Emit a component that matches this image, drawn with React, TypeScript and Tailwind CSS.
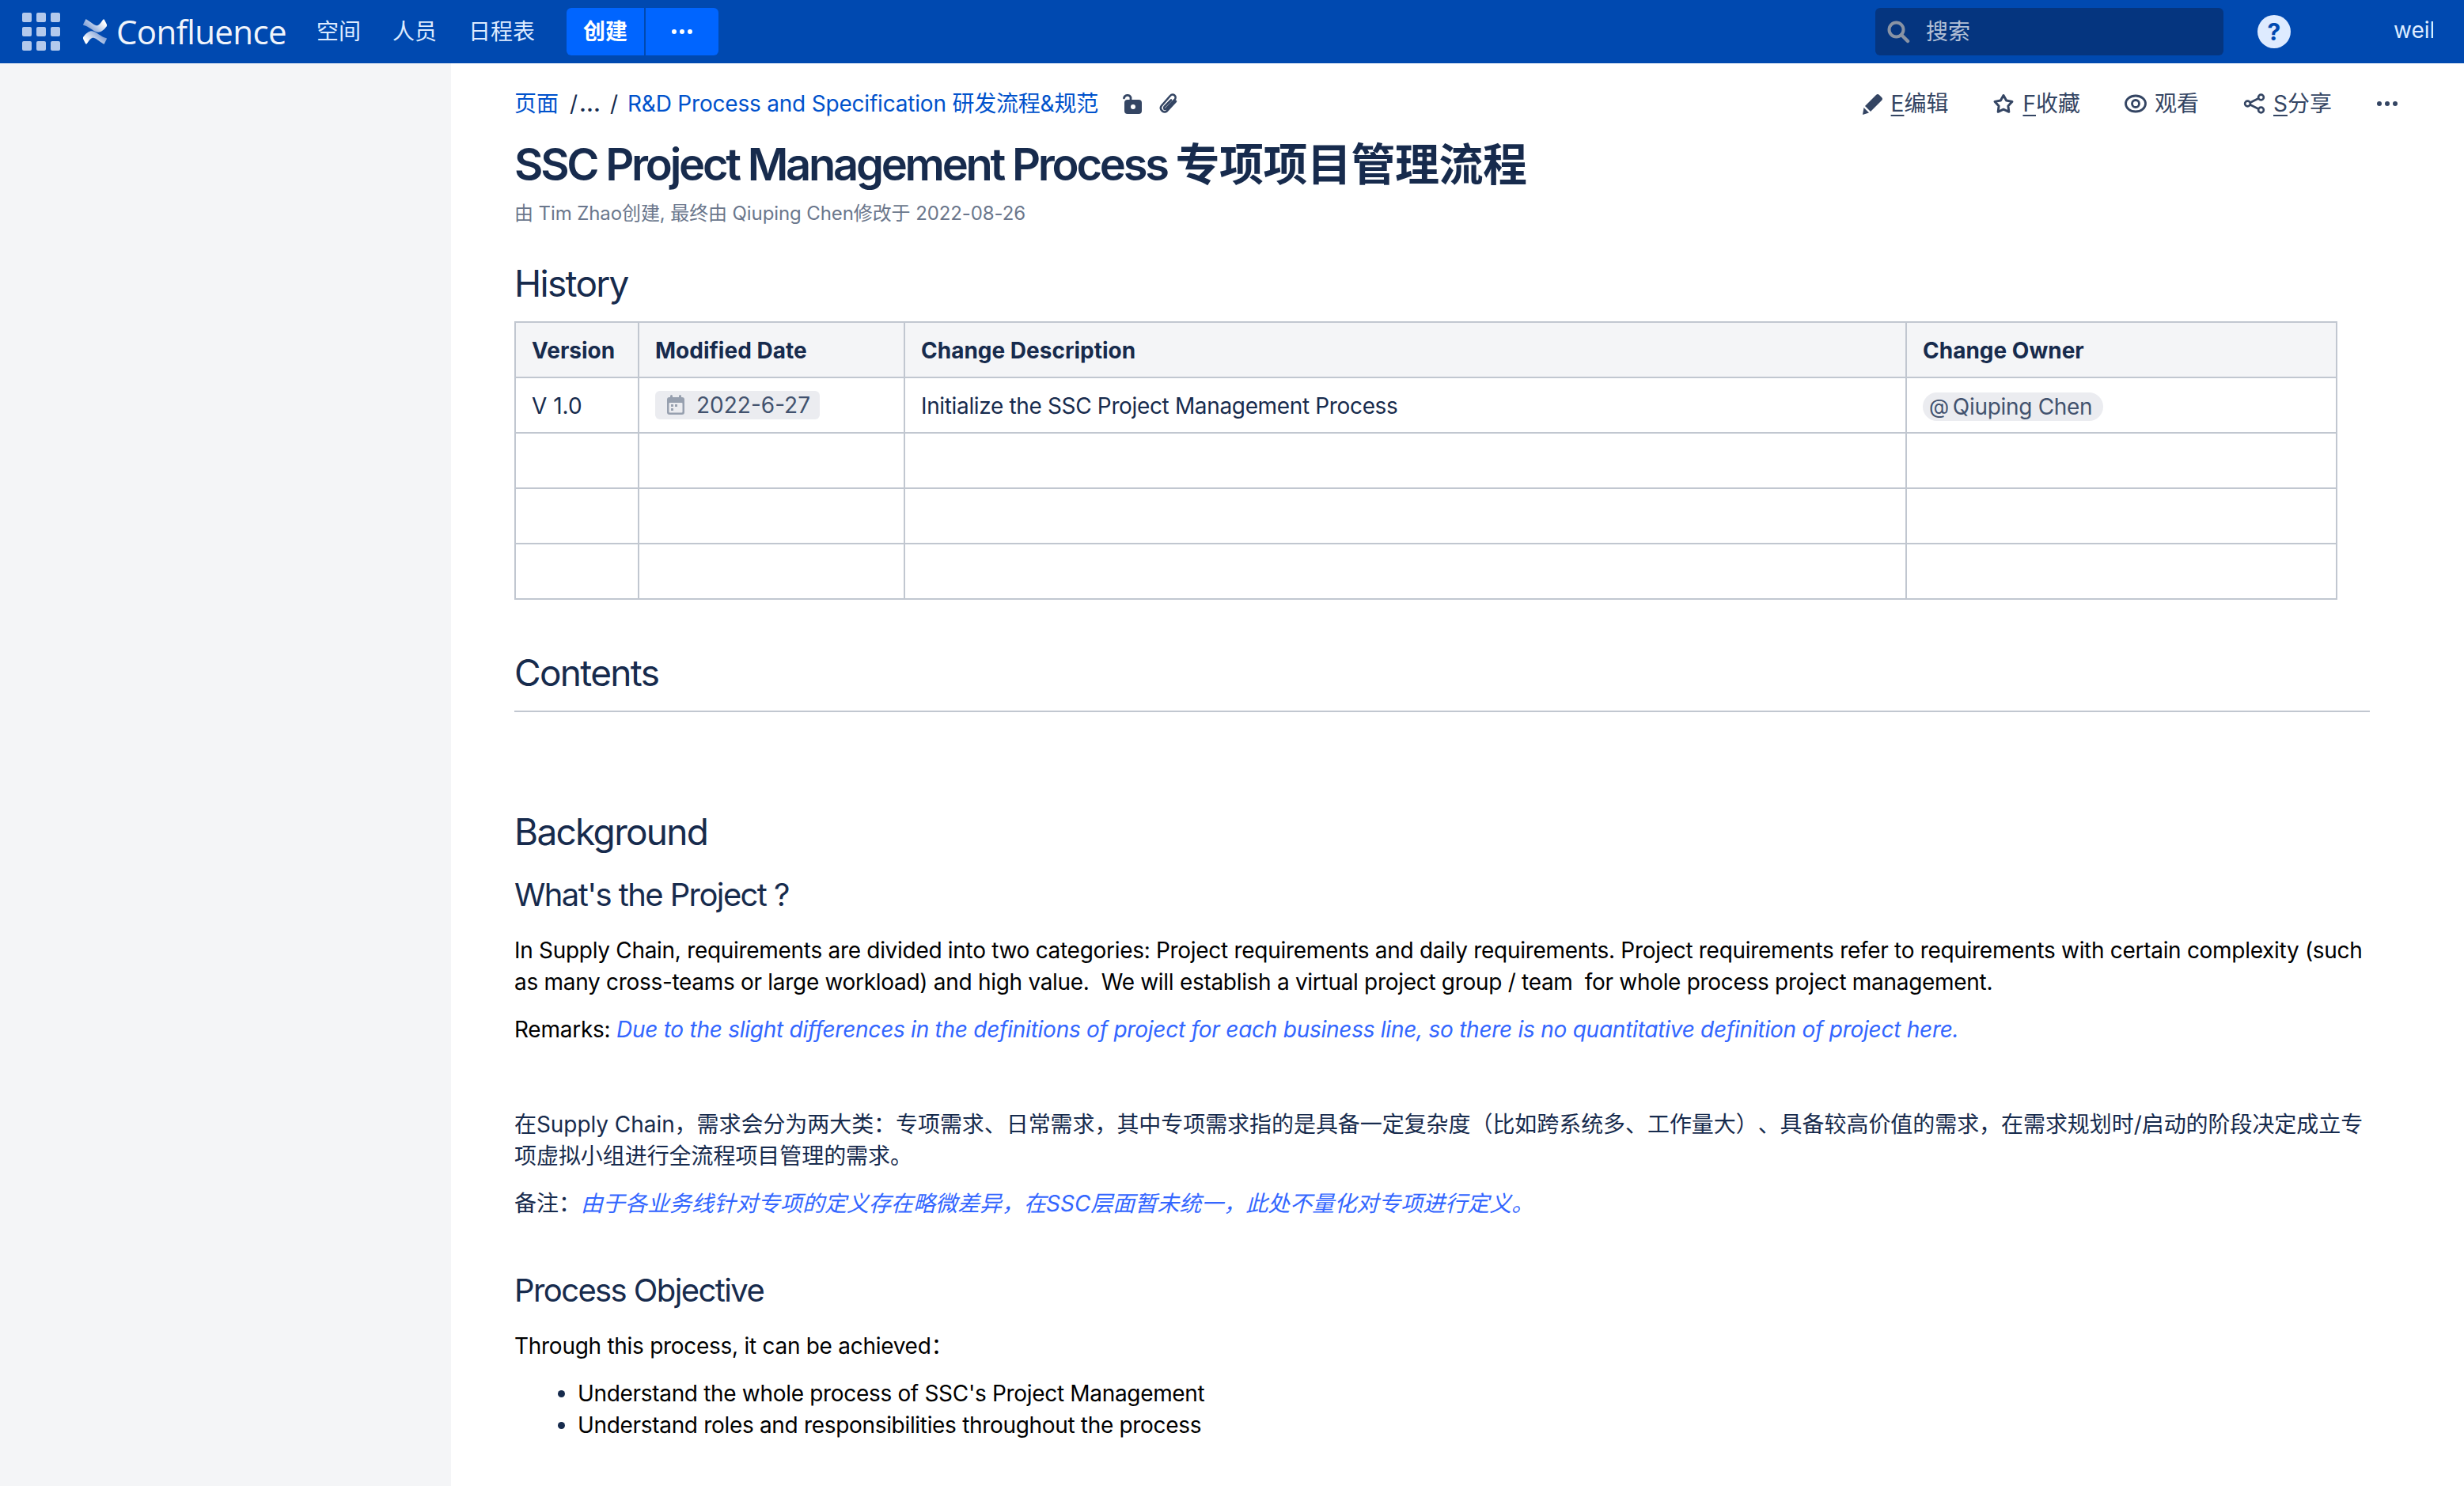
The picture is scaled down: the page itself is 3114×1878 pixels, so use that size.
import React from "react";

const font = { fontFamily: 'Inter, "Noto Sans CJK SC", sans-serif' };

function AppGrid() {
  return (
    <div className="grid grid-cols-3 gap-[6px] w-[48px]">
      {Array.from({ length: 9 }).map((_, i) => (
        <div key={i} className="w-[12px] h-[12px] rounded-[2px] bg-[#b3c9ec]" />
      ))}
    </div>
  );
}

function Logo() {
  return (
    <svg width="32" height="32" viewBox="0 0 32 32" className="mb-[1px]">
      <defs>
        <linearGradient id="lg2" x1="1" y1="0" x2="0" y2="0.6">
          <stop offset="0.2" stopColor="#ffffff" />
          <stop offset="1" stopColor="#6f93d0" />
        </linearGradient>
        <linearGradient id="lg3" x1="0" y1="1" x2="1" y2="0.4">
          <stop offset="0.2" stopColor="#ffffff" />
          <stop offset="1" stopColor="#6f93d0" />
        </linearGradient>
      </defs>
      <path d="M1 23c5-7 10-9 14-7 5 2 8 6 15 8 1 0 1 1 1 1l-3 6c0 1-1 1-2 0-5-3-8-6-11-7-3-1-5 1-9 7-1 1-1 1-2 0l-3-6z" fill="url(#lg3)" />
      <path d="M31 9c-5 7-10 9-14 7-5-2-8-6-15-8-1 0-1-1-1-1l3-6c0-1 1-1 2 0 5 3 8 6 11 7 3 1 5-1 9-7 1-1 1-1 2 0l3 6z" fill="url(#lg2)" />
    </svg>
  );
}

function Dots({ color, size = 6 }: { color: string; size?: number }) {
  return (
    <svg width={size * 3 + 8} height={size} viewBox={`0 0 ${size * 3 + 8} ${size}`}>
      <circle cx={size / 2} cy={size / 2} r={size / 2} fill={color} />
      <circle cx={size * 1.5 + 4} cy={size / 2} r={size / 2} fill={color} />
      <circle cx={size * 2.5 + 8} cy={size / 2} r={size / 2} fill={color} />
    </svg>
  );
}

function Action({ icon, hotkey, label }: { icon: React.ReactNode; hotkey?: string; label: string }) {
  return (
    <div className="flex items-center gap-[10px]">
      {icon}
      <span className="text-[28px] leading-[40px] text-[#344563]">
        {hotkey && <span className="underline underline-offset-[4px] decoration-2">{hotkey}</span>}
        {label}
      </span>
    </div>
  );
}

const Pencil = (
  <svg width="28" height="28" viewBox="0 0 28 28">
    <path d="M5 17L19 3Q21 1 23 3L26 6Q28 8 26 10L12 24Z" fill="#344563" />
    <path d="M3.5 19L10 25.5L2 28Z" fill="#344563" />
  </svg>
);
const Star = (
  <svg width="28" height="28" viewBox="0 0 28 28">
    <path d="M14 3.5L17.6 10L24.9 11.4L19.9 16.9L20.8 24.3L14 21.2L7.2 24.3L8.1 16.9L3.1 11.4L10.4 10Z" fill="none" stroke="#344563" strokeWidth="3" strokeLinejoin="round" />
  </svg>
);
const Eye = (
  <svg width="28" height="28" viewBox="0 0 28 28">
    <ellipse cx="14" cy="14" rx="12.5" ry="10" fill="none" stroke="#344563" strokeWidth="2.8" />
    <circle cx="14" cy="14" r="4.5" fill="none" stroke="#344563" strokeWidth="2.8" />
  </svg>
);
const Share = (
  <svg width="28" height="28" viewBox="0 0 28 28">
    <path d="M22 6L6 14l16 8" fill="none" stroke="#344563" strokeWidth="2.6" />
    <circle cx="22.5" cy="6" r="3.4" fill="#fff" stroke="#344563" strokeWidth="2.6" />
    <circle cx="5.5" cy="14" r="3.4" fill="#fff" stroke="#344563" strokeWidth="2.6" />
    <circle cx="22.5" cy="22" r="3.4" fill="#fff" stroke="#344563" strokeWidth="2.6" />
  </svg>
);

function CalendarIcon() {
  return (
    <svg width="24" height="26" viewBox="0 0 24 26">
      <rect x="5" y="0" width="3" height="6" rx="1.5" fill="#97a0af" />
      <rect x="16" y="0" width="3" height="6" rx="1.5" fill="#97a0af" />
      <rect x="1" y="3" width="22" height="22" rx="3" fill="#97a0af" />
      <rect x="3.5" y="10" width="17" height="12.5" rx="1" fill="#ebecf0" />
      <rect x="6" y="12" width="3" height="3" fill="#97a0af" />
      <rect x="11" y="12" width="3" height="3" fill="#97a0af" />
      <rect x="6" y="17" width="3" height="3" fill="#97a0af" />
    </svg>
  );
}

const cellCls = "border-2 border-[#c1c7d0] px-[20px] pt-[2px] pb-0 text-left align-middle h-[70px]";

export default function App() {
  return (
    <div className="w-[3114px] h-[1878px] overflow-hidden bg-white text-[#172b4d] flex flex-col [text-spacing-trim:space-all]" style={font}>
      <header className="h-[80px] shrink-0 bg-[#0049b0] flex items-center text-white">
        <div className="ml-[28px]"><AppGrid /></div>
        <div className="ml-[28px]"><Logo /></div>
        <span className="ml-[11px] text-[42px] leading-[48px] text-[#f0f4fb] tracking-[-0.6px]" style={{ fontFamily: '"Open Sans", sans-serif' }}>Confluence</span>
        <nav className="ml-[38px] flex gap-[40px] text-[28px] text-[#deebff]">
          <span>空间</span>
          <span>人员</span>
          <span>日程表</span>
        </nav>
        <div className="ml-[40px] h-[60px] w-[192px] rounded-[6px] bg-[#0065ff] flex items-stretch">
          <div className="w-[100px] flex items-center justify-center text-[28px] font-bold border-r-2 border-[#0049b0]">创建</div>
          <div className="flex-1 flex items-center justify-center"><Dots color="#ffffff" /></div>
        </div>
        <div className="ml-auto w-[440px] h-[60px] rounded-[6px] bg-[#05357f] flex items-center pl-[14px]">
          <svg width="30" height="30" viewBox="0 0 30 30">
            <circle cx="12.5" cy="12.5" r="9" fill="none" stroke="#8993a4" strokeWidth="4" />
            <path d="M19 19l8 8" stroke="#8993a4" strokeWidth="4.5" strokeLinecap="round" />
          </svg>
          <span className="ml-[20px] text-[28px] text-[#b3c0d6]">搜索</span>
        </div>
        <div className="ml-[43px] w-[42px] h-[42px] rounded-full bg-[#deebff] flex items-center justify-center">
          <span className="text-[30px] font-bold text-[#0049b0] leading-none">?</span>
        </div>
        <div className="ml-[130px] mr-[39px] w-[50px] overflow-hidden text-[28px] leading-[38px] mb-[4px] text-[#deebff] whitespace-nowrap">weilin</div>
      </header>

      <div className="flex flex-1 min-h-0">
        <aside className="w-[570px] shrink-0 bg-[#f4f5f7]" />
        <main className="flex-1 pl-[80px] pr-[119px]">
          <div className="flex items-center justify-between h-[40px] mt-[31px] mr-[-35px]">
            <div className="flex items-center text-[28px] leading-[40px] text-[#0052cc]">
              <span>页面</span>
              <span className="ml-[14px] text-[#172b4d]">/</span>
              <span className="ml-[2px] text-[#172b4d] font-semibold">...</span>
              <span className="ml-[12px] text-[#172b4d]">/</span>
              <span className="ml-[12px] tracking-[-0.2px]">R&amp;D Process and Specification 研发流程&amp;规范</span>
              <svg className="ml-[30px]" width="26" height="28" viewBox="0 0 26 28">
                <rect x="3" y="9" width="22" height="18" rx="4" fill="#344563" />
                <path d="M2.5 7A4.5 4.5 0 0 1 11 6V11" fill="none" stroke="#344563" strokeWidth="2.8" strokeLinecap="round" />
                <circle cx="14" cy="18" r="3" fill="#fff" />
              </svg>
              <svg className="ml-[18px]" width="26" height="28" viewBox="0 0 26 28">
                <path d="M24 11L12.500 23.500c-3.500 3.500-10-2.500-6.500-7L17 4c3.500-4 9 1 5.500 5L11.500 20.500c-1.500 1.500-3.500-.5-2-2.500L18 9.500" fill="none" stroke="#344563" strokeWidth="2.6" strokeLinecap="round" strokeLinejoin="round" />
              </svg>
            </div>
            <div className="flex items-center gap-[56px]">
              <Action icon={Pencil} hotkey="E" label="编辑" />
              <Action icon={Star} hotkey="F" label="收藏" />
              <Action icon={Eye} label="观看" />
              <Action icon={Share} hotkey="S" label="分享" />
              <div className="ml-[1px]"><Dots color="#344563" /></div>
            </div>
          </div>

          <h1 className="mt-[22px] text-[56px] leading-[70px] font-semibold text-[#172b4d]">
            <span className="tracking-[-3.25px]">SSC Project Management Process </span><span className="tracking-[-0.5px]">专项项目管理流程</span>
          </h1>
          <p className="mt-[9px] text-[24px] leading-[36px] text-[#6b778c] tracking-[-0.1px]">
            由 Tim Zhao创建, 最终由 Qiuping Chen修改于 2022-08-26
          </p>

          <h2 className="mt-[42px] text-[46px] leading-[56px] tracking-[-1.7px] text-[#172b4d]">History</h2>
          <table className="mt-[20px] border-collapse table-fixed w-[2302px] text-[28px] text-[#172b4d]">
            <colgroup>
              <col className="w-[156px]" />
              <col className="w-[336px]" />
              <col className="w-[1266px]" />
              <col className="w-[544px]" />
            </colgroup>
            <thead>
              <tr className="bg-[#f4f5f7] font-bold">
                <th className={cellCls}>Version</th>
                <th className={cellCls}>Modified Date</th>
                <th className={cellCls}>Change Description</th>
                <th className={cellCls}>Change Owner</th>
              </tr>
            </thead>
            <tbody>
              <tr>
                <td className={cellCls}>V 1.0</td>
                <td className={cellCls}>
                  <span className="inline-flex items-center h-[36px] w-[208px] rounded-[6px] bg-[#ebecf0] pl-[14px] text-[#42526e] translate-y-[2px]">
                    <CalendarIcon />
                    <span className="ml-[14px]">2022-6-27</span>
                  </span>
                </td>
                <td className={cellCls + " tracking-[-0.35px]"}>Initialize the SSC Project Management Process</td>
                <td className={cellCls}>
                  <span className="inline-flex items-center h-[36px] rounded-[18px] bg-[#ebecf0] pl-[8px] pr-[14px] text-[#42526e] tracking-[-0.3px]">
                    <span className="mr-[5px] text-[26px]">@</span>Qiuping Chen
                  </span>
                </td>
              </tr>
              {[0, 1, 2].map((i) => (
                <tr key={i}>
                  <td className={cellCls} />
                  <td className={cellCls} />
                  <td className={cellCls} />
                  <td className={cellCls} />
                </tr>
              ))}
            </tbody>
          </table>

          <h2 className="mt-[64px] pb-[20px] border-b-2 border-[#c1c7d0] text-[46px] leading-[56px] tracking-[-1.7px] text-[#172b4d]">Contents</h2>

          <h2 className="mt-[123px] text-[46px] leading-[56px] tracking-[-1.7px] text-[#172b4d]">Background</h2>
          <h3 className="mt-[26px] text-[40px] leading-[52px] tracking-[-1.6px] text-[#172b4d]">What's the Project ?</h3>
          <p className="mt-[24px] text-[28px] leading-[40px] text-[#000000] tracking-[-0.3px]">
            In Supply Chain, requirements are divided into two categories: Project requirements and daily requirements. Project requirements refer to requirements with certain complexity (such as many cross-teams or large workload) and high value.&nbsp; We will establish a virtual project group / team&nbsp; for whole process project management.
          </p>
          <p className="mt-[20px] text-[28px] leading-[40px] text-[#000000] tracking-[-0.255px]">
            Remarks: <em className="text-[#3366ff]">Due to the slight differences in the definitions of project for each business line, so there is no quantitative definition of project here.</em>
          </p>
          <p className="mt-[80px] text-[28px] leading-[40px] text-[#172b4d] tracking-[-0.06px]">
            在Supply Chain，需求会分为两大类：专项需求、日常需求，其中专项需求指的是具备一定复杂度（比如跨系统多、工作量大）、具备较高价值的需求，在需求规划时/启动的阶段决定成立专项虚拟小组进行全流程项目管理的需求。
          </p>
          <p className="mt-[20px] text-[28px] leading-[40px] text-[#172b4d]">
            备注：<em className="text-[#3366ff]">由于各业务线针对专项的定义存在略微差异，在SSC层面暂未统一，此处不量化对专项进行定义。</em>
          </p>
          <h3 className="mt-[64px] text-[40px] leading-[52px] tracking-[-1.6px] text-[#172b4d]">Process Objective</h3>
          <p className="mt-[24px] text-[28px] leading-[40px] text-[#000000] tracking-[-0.28px]">Through this process, it can be achieved：</p>
          <ul className="mt-[20px] list-disc pl-[80px] text-[28px] leading-[40px] text-[#172b4d] tracking-[-0.32px]">
            <li className="text-[#000000] marker:text-[#172b4d]">Understand the whole process of SSC's Project Management</li>
            <li className="text-[#000000] marker:text-[#172b4d]">Understand roles and responsibilities throughout the process</li>
          </ul>
        </main>
      </div>
    </div>
  );
}
